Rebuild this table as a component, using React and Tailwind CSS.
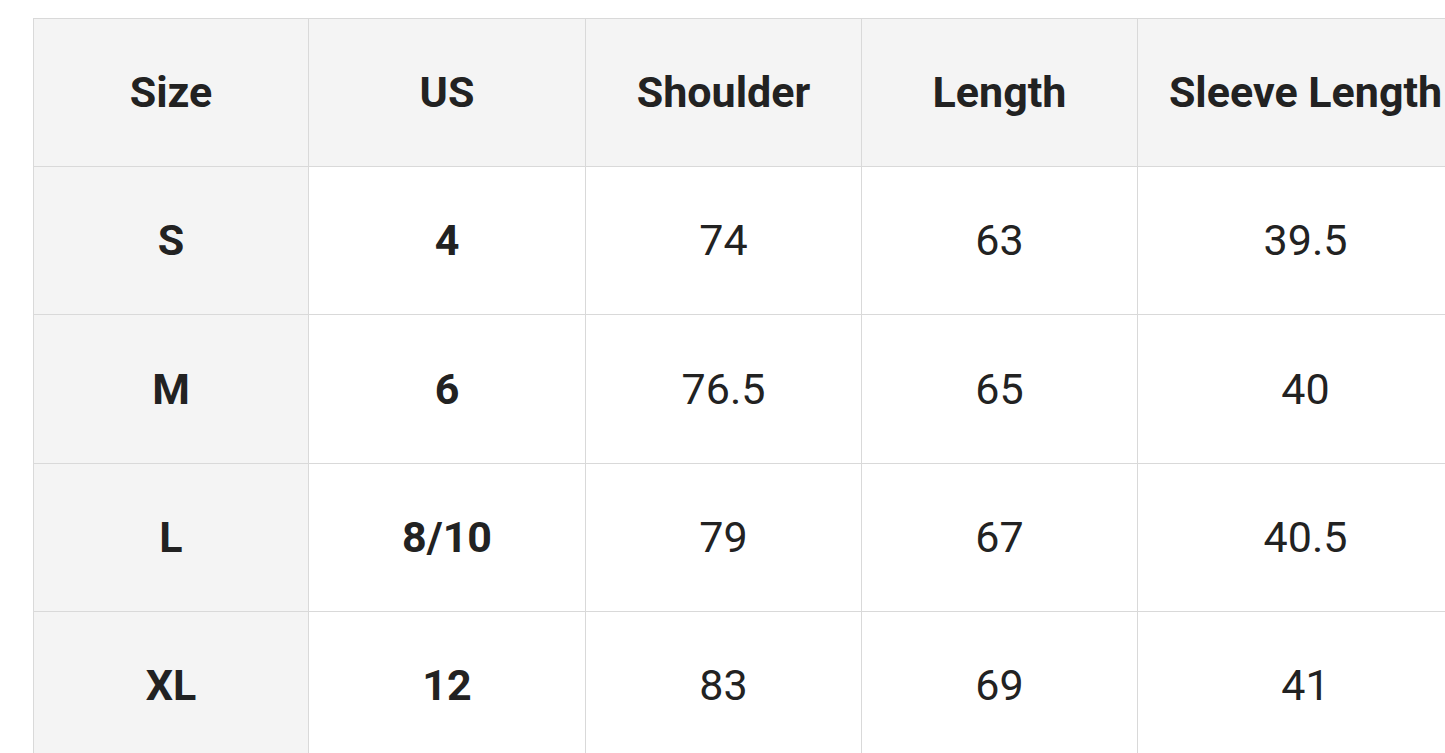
const headers = ['Size', 'US', 'Shoulder', 'Length', 'Sleeve Length'];

const rows = [
    ['S', '4', '74', '63', '39.5'],
    ['M', '6', '76.5', '65', '40'],
    ['L', '8/10', '79', '67', '40.5'],
    ['XL', '12', '83', '69', '41'],
];

const colWidths = ['w-[275px]', 'w-[277px]', 'w-[276px]', 'w-[276px]', 'w-[336px]'];
const rowHeights = ['h-[148px]', 'h-[149px]', 'h-[148px]', 'h-[148px]'];

export default function App() {
    return (
        <div className="w-[1445px] h-[753px] overflow-hidden bg-white pt-[18px] pl-[33px]" style={{ fontFamily: 'Roboto, "Noto Sans", sans-serif' }}>
            <table className="table-fixed border-collapse text-[#222] text-[43px] leading-none w-[1440px]">
                <colgroup>
                    {colWidths.map((w, i) => (
                        <col key={i} className={w} />
                    ))}
                </colgroup>
                <thead>
                    <tr className="h-[148px] bg-[#f4f4f4]">
                        {headers.map((h) => (
                            <th key={h} className="border border-[#d9d9d9] font-bold text-center whitespace-nowrap">
                                {h}
                            </th>
                        ))}
                    </tr>
                </thead>
                <tbody>
                    {rows.map((row, r) => (
                        <tr key={row[0]} className={rowHeights[r]}>
                            {row.map((cell, i) => (
                                <td
                                    key={i}
                                    className={`border border-[#d9d9d9] text-center ${i === 0 ? 'bg-[#f4f4f4] font-bold' : i === 1 ? 'bg-white font-bold' : 'bg-white font-normal'}`}
                                >
                                    {cell}
                                </td>
                            ))}
                        </tr>
                    ))}
                </tbody>
            </table>
        </div>
    );
}
